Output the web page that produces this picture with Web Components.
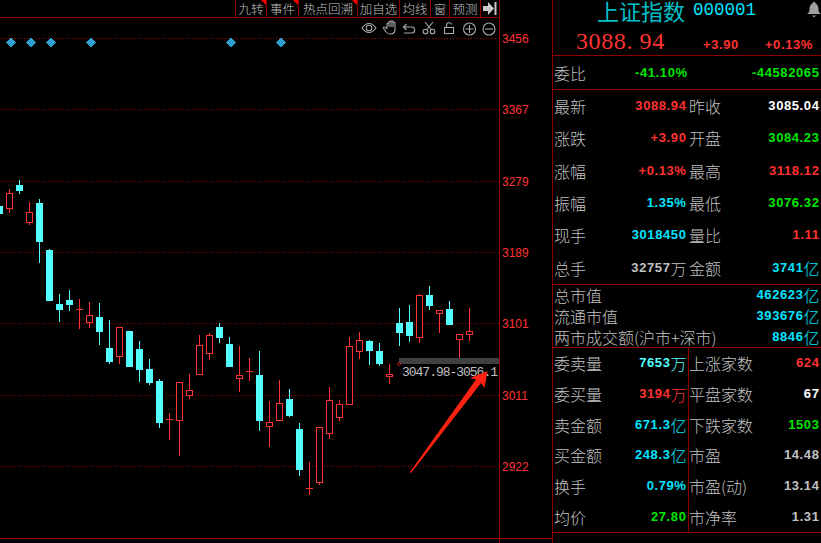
<!DOCTYPE html>
<html lang="zh">
<head>
<meta charset="utf-8">
<title>上证指数</title>
<style>
  html, body { margin: 0; height: 100%; background: #000; overflow: hidden; }
  body { font-family: "Noto Sans CJK SC", sans-serif; }
</style>
</head>
<body>
<stock-terminal>
  <chart-pane slot="chart">
    <tool-tab w="31" flag>九转</tool-tab>
    <tool-tab w="32" flag>事件</tool-tab>
    <tool-tab w="59" flag>热点回溯</tool-tab>
    <tool-tab w="42">加自选</tool-tab>
    <tool-tab w="31">均线</tool-tab>
    <tool-tab w="19">窗</tool-tab>
    <tool-tab w="31">预测</tool-tab>
  </chart-pane>
  <quote-panel slot="quote">
    <quote-block slot="main" rows="6" h="194" cols="2">
      <quote-cell label="最新" value="3088.94" tone="red"></quote-cell>
      <quote-cell label="昨收" value="3085.04" tone="white"></quote-cell>
      <quote-cell label="涨跌" value="+3.90" tone="red"></quote-cell>
      <quote-cell label="开盘" value="3084.23" tone="green"></quote-cell>
      <quote-cell label="涨幅" value="+0.13%" tone="red"></quote-cell>
      <quote-cell label="最高" value="3118.12" tone="red"></quote-cell>
      <quote-cell label="振幅" value="1.35%" tone="cyan"></quote-cell>
      <quote-cell label="最低" value="3076.32" tone="green"></quote-cell>
      <quote-cell label="现手" value="3018450" tone="cyan"></quote-cell>
      <quote-cell label="量比" value="1.11" tone="red"></quote-cell>
      <quote-cell label="总手" value="32757" unit="万" tone="grey"></quote-cell>
      <quote-cell label="金额" value="3741" unit="亿" tone="cyan"></quote-cell>
    </quote-block>
    <quote-block slot="main" rows="3" h="62" cols="1">
      <quote-cell label="总市值" value="462623" unit="亿" tone="cyan"></quote-cell>
      <quote-cell label="流通市值" value="393676" unit="亿" tone="cyan"></quote-cell>
      <quote-cell label="两市成交额(沪市+深市)" value="8846" unit="亿" tone="cyan"></quote-cell>
    </quote-block>
    <quote-block slot="main" rows="6" h="184" cols="2" divided>
      <quote-cell label="委卖量" value="7653" unit="万" tone="aqua"></quote-cell>
      <quote-cell label="上涨家数" value="624" tone="red"></quote-cell>
      <quote-cell label="委买量" value="3194" unit="万" tone="red"></quote-cell>
      <quote-cell label="平盘家数" value="67" tone="white"></quote-cell>
      <quote-cell label="卖金额" value="671.3" unit="亿" tone="cyan"></quote-cell>
      <quote-cell label="下跌家数" value="1503" tone="green"></quote-cell>
      <quote-cell label="买金额" value="248.3" unit="亿" tone="cyan"></quote-cell>
      <quote-cell label="市盈" value="14.48" tone="grey"></quote-cell>
      <quote-cell label="换手" value="0.79%" tone="cyan"></quote-cell>
      <quote-cell label="市盈(动)" value="13.14" tone="grey"></quote-cell>
      <quote-cell label="均价" value="27.80" tone="green"></quote-cell>
      <quote-cell label="市净率" value="1.31" tone="grey"></quote-cell>
    </quote-block>
  </quote-panel>
</stock-terminal>

<script>
const LINE = "#8c0000";
const RED = "#ff3232";
const AQUA = "#54ffff";

class StockTerminal extends HTMLElement {
  constructor() {
    super();
    this.attachShadow({ mode: "open" }).innerHTML = `
      <style>
        :host { display: grid; grid-template-columns: 552px 269px; width: 821px; height: 543px; background: #000; overflow: hidden; }
      </style>
      <slot name="chart"></slot>
      <slot name="quote"></slot>
    `;
  }
}

class ToolTab extends HTMLElement {
  constructor() {
    super();
    this.attachShadow({ mode: "open" }).innerHTML = `
      <style>
        :host { display: block; position: relative; box-sizing: border-box; height: 17px; border-left: 1px solid ${LINE};
          color: #c0c0c0; font: 300 12.5px/17px "Noto Sans CJK SC", sans-serif; text-align: center; white-space: nowrap; }
        :host([flag])::after { content: ""; position: absolute; top: 0; right: 0; border-top: 5px solid #f00; border-left: 5px solid transparent; }
      </style>
      <slot></slot>
    `;
  }
  connectedCallback() {
    this.style.width = this.getAttribute("w") + "px";
  }
}

// x of wick = 9 + 10 * i. [type, body top, body bottom, high, low]
const CANDLES = [
  ["c",206,214,206,214],
  ["r",193,209,189,213],["c",185,191,180,194],["r",212,223,202,225],["c",203,242,199,263],
  ["c",250,301,249,301],["c",304,310,294,322],["c",300,305,290,311],["d",309,309,299,329],
  ["r",315,323,302,328],["c",317,332,303,345],["c",348,362,320,364],["r",327,357,327,364],
  ["c",331,367,331,367],["c",349,370,341,382],["c",369,383,359,385],["c",381,423,379,428],
  ["d",419,419,413,440],["r",382,421,382,456],["r",390,396,374,399],["r",345,375,335,375],
  ["r",335,354,333,360],["c",327,338,323,343],["c",344,367,337,367],["r",375,379,346,392],
  ["d",371,371,358,381],["c",375,421,351,431],["r",422,427,401,447],["r",403,421,380,421],
  ["c",399,416,389,417],["c",429,470,423,476],["d",488,488,462,495],["r",427,483,427,485],
  ["r",400,434,387,439],["r",404,418,400,421],["r",346,405,337,405],["r",340,352,332,359],
  ["c",341,351,340,365],["c",351,364,343,366],["r",374,377,364,384],["c",323,333,308,346],
  ["c",322,336,305,342],["r",295,338,294,343],["c",295,306,286,310],["r",310,314,310,333],
  ["c",309,325,301,325],["r",334,340,334,358],["r",331,335,308,341],
];
const LEVELS = [[3456,38],[3367,109],[3279,181],[3189,252],[3101,323],[3011,395],[2922,466]];
const MARKS = [10,30,50,90,230,280];

function candleSvg([type, top, bottom, high, low], i) {
  const x = 10 * i - 1;
  const color = type === "c" ? AQUA : RED;
  let out = `<rect x="${x}" y="${high}" width="1" height="${low - high}" fill="${color}"/>`;
  if (type === "c") out += `<rect x="${x - 3}" y="${top}" width="7" height="${bottom - top}" fill="${color}"/>`;
  if (type === "r") out += `<rect x="${x - 2.5}" y="${top + 0.5}" width="6" height="${bottom - top - 1}" fill="#000" stroke="${color}"/>`;
  if (type === "d") out += `<rect x="${x - 3}" y="${top}" width="7" height="1" fill="${color}"/>`;
  return out;
}

class ChartPane extends HTMLElement {
  constructor() {
    super();
    const grid = LEVELS.map(([, y]) => `<line x1="0" x2="499" y1="${y + 0.5}" y2="${y + 0.5}" stroke="#a00000" stroke-dasharray="1 2"/>`).join("");
    const labels = LEVELS.map(([p, y]) => `<text x="502" y="${y + 4.5}">${p}</text>`).join("");
    const marks = MARKS.map(x => `<path d="M${x + 0.5} 37.5l5 5-5 5-5-5z" fill="#2f9fd0"/>`).join("");
    this.attachShadow({ mode: "open" }).innerHTML = `
      <style>
        :host { display: flex; flex-direction: column; position: relative; height: 543px; }
        .bar { display: flex; justify-content: flex-end; width: 500px; box-sizing: border-box; height: 18px; border-bottom: 1px solid ${LINE}; border-right: 1px solid ${LINE}; }
        .end { display: flex; align-items: center; justify-content: center; width: 19px; border-left: 1px solid ${LINE}; box-sizing: border-box; }
        .plot { display: block; flex: 1; }
        .axis text { font: 12px "Liberation Sans", sans-serif; fill: #ff3232; }
        .range { font: 13px "Liberation Mono", monospace; fill: #c0c0c0; }
        .icons { position: absolute; left: 359px; top: 19px; }
      </style>
      <div class="bar">
        <slot></slot>
        <div class="end">
          <svg width="14" height="13" viewBox="0 0 14 13"><path d="M0 4h5V0l6 6.500-6 6.500V9H0z" fill="#c8c8c8"/><rect x="11.500" y="0" width="2" height="13" fill="#c8c8c8"/></svg>
        </div>
      </div>
      <svg class="plot" width="552" height="525" viewBox="0 18 552 525" shape-rendering="crispEdges">
        ${grid}
        ${marks}
        ${CANDLES.map((c, i) => candleSvg(c, i)).join("")}
        <rect x="499" y="18" width="1" height="525" fill="${LINE}"/>
        <rect x="0" y="538" width="552" height="1" fill="${LINE}"/>
        <g class="axis" shape-rendering="auto">${labels}</g>
        <rect x="399" y="358" width="100" height="6" fill="#404040"/>
        <circle cx="399" cy="364" r="1.500" fill="#000" stroke="#a02020" shape-rendering="auto"/>
        <text class="range" x="402" y="375.500" shape-rendering="auto" textLength="96">3047.98-3056.1</text>
        <polygon points="410,472 476,379.500 470,378 487.500,371 484.500,388 481,383 411,473" fill="#ff2212" shape-rendering="auto"/>
      </svg>
      <svg class="icons" width="140" height="18" viewBox="0 0 140 18" fill="none" stroke="#a8a8a8" stroke-width="1.100">
        <path d="M3 9c2.500-3.500 5-4.500 7-4.500s4.500 1 7 4.500c-2.500 3.500-5 4.500-7 4.500S5.500 12.500 3 9z"/><circle cx="10" cy="9" r="2.800"/>
        <path transform="translate(2 1) scale(1 .88)" d="M26 10V4.500c0-1.400 2-1.400 2 0V8m0-.5V2.500c0-1.400 2-1.400 2 0V8m0-.5V2c0-1.400 2-1.400 2 0v6m0-.5V3.500c0-1.400 2-1.400 2 0V11c0 3-2 5-5 5-2 0-3-.7-4-2.500l-2.500-4c-.7-1.300 1-2.200 2-1l1.500 1.800"/>
        <path d="M47.500 5l-3 3 3 3M44.500 8H53c3.500 0 3.500 6 0 6h-8"/>
        <circle cx="66.500" cy="12.500" r="2.300"/><circle cx="73.500" cy="12.500" r="2.300"/><path d="M67.800 10.500L74 3M72.200 10.500L66 3"/>
        <rect x="85.500" y="8.500" width="9" height="6"/><path d="M87.500 8.500V6c0-3 5-3 5-.5"/>
        <circle cx="110.500" cy="10" r="6"/><path d="M106.500 10h8M110.500 6v8"/>
        <circle cx="130" cy="10" r="6"/><path d="M126 10h8"/>
      </svg>
    `;
  }
}

class QuotePanel extends HTMLElement {
  constructor() {
    super();
    this.attachShadow({ mode: "open" }).innerHTML = `
      <style>
        :host { display: block; box-sizing: border-box; width: 269px; height: 543px; border-left: 1px solid ${LINE}; background: #000; overflow: hidden; }
        .title { position: relative; display: flex; align-items: flex-start; gap: 8px; height: 24px; padding-left: 44px; }
        .title b { font: 400 22px/21px "Noto Sans CJK SC", sans-serif; color: #00c0cc; }
        .title span { font: 17.500px/21px "Liberation Mono", monospace; color: #00e5ff; }
        .bell { position: absolute; right: 0; top: 2px; }
        .price { display: flex; align-items: baseline; height: 32px; padding: 4px 0 0 23px; box-sizing: border-box; border-bottom: 1px solid ${LINE};
          color: #ff3232; font: 700 13px/27px "Liberation Sans", sans-serif; letter-spacing: .6px; }
        .price i { font: 24px/27px "Liberation Serif", serif; letter-spacing: .6px; width: 127px; white-space: pre; }
        .price span + span { margin-left: 26px; }
        .ratio { display: flex; align-items: center; height: 34px; box-sizing: border-box; padding: 0 1.500px 0 1px; border-bottom: 1px solid ${LINE}; }
        .ratio label { color: #c0c0c0; font: 300 16px "Noto Sans CJK SC", sans-serif; width: 81px; }
        .ratio span { color: #00e600; font: 700 13px "Liberation Sans", sans-serif; letter-spacing: .6px; }
        .ratio span:last-child { margin-left: auto; }
      </style>
      <div class="title">
        <b>上证指数</b><span>000001</span>
        <svg class="bell" width="14" height="16" viewBox="0 0 14 16"><path d="M7 0c1 0 1.500.6 1.500 1.500C11 2.300 11.500 5 11.500 8c0 1.500 1 3 2.500 4H0c1.500-1 2.500-2.500 2.500-4 0-3 .5-5.700 3-6.500C5.500.6 6 0 7 0z" fill="#a0a0a0"/><path d="M5 13.500h4L7 15.500z" fill="#a0a0a0"/></svg>
      </div>
      <div class="price"><i>3088. 94</i><span>+3.90</span><span>+0.13%</span></div>
      <div class="ratio"><label>委比</label><span>-41.10%</span><span>-44582065</span></div>
      <slot name="main"></slot>
    `;
  }
}

class QuoteBlock extends HTMLElement {
  constructor() {
    super();
    this.attachShadow({ mode: "open" }).innerHTML = `
      <style>
        :host { display: grid; box-sizing: content-box; border-bottom: 1px solid ${LINE}; position: relative; }
        :host([divided])::after { content: ""; position: absolute; top: 0; bottom: 0; left: 135px; width: 1px; background: ${LINE}; }
      </style>
      <slot></slot>
    `;
  }
  connectedCallback() {
    const cols = this.getAttribute("cols") === "2" ? "135px 133px" : "268px";
    this.style.gridTemplateColumns = cols;
    this.style.gridTemplateRows = `repeat(${this.getAttribute("rows")}, 1fr)`;
    this.style.height = this.getAttribute("h") + "px";
  }
}

const cellTemplate = document.createElement("template");
cellTemplate.innerHTML = `
  <style>
    :host { display: flex; align-items: center; justify-content: space-between; padding: 0 1.5px 0 1px; white-space: nowrap; min-width: 0; }
    label { color: #c0c0c0; font: 300 16px/20px "Noto Sans CJK SC", sans-serif; }
    .value { display: flex; align-items: center; font: 700 13px/20px "Liberation Sans", sans-serif; letter-spacing: .6px; }
    .value u { text-decoration: none; font: 300 16px/20px "Noto Sans CJK SC", sans-serif; letter-spacing: 0; }
    :host([tone="red"]) .value { color: #ff3232; }
    :host([tone="green"]) .value { color: #00e600; }
    :host([tone="cyan"]) .value { color: #00e5ff; }
    :host([tone="aqua"]) .value { color: #54ffff; }
    :host([tone="white"]) .value { color: #fff; }
    :host([tone="grey"]) .value { color: #c0c0c0; }
  </style>
  <label></label>
  <span class="value"><span class="num"></span><u></u></span>
`;

class QuoteCell extends HTMLElement {
  constructor() {
    super();
    this.attachShadow({ mode: "open" }).appendChild(cellTemplate.content.cloneNode(true));
  }
  connectedCallback() {
    this.shadowRoot.querySelector("label").textContent = this.getAttribute("label");
    this.shadowRoot.querySelector(".num").textContent = this.getAttribute("value");
    this.shadowRoot.querySelector("u").textContent = this.getAttribute("unit") || "";
  }
}

window.customElements.define("stock-terminal", StockTerminal);
window.customElements.define("tool-tab", ToolTab);
window.customElements.define("chart-pane", ChartPane);
window.customElements.define("quote-panel", QuotePanel);
window.customElements.define("quote-block", QuoteBlock);
window.customElements.define("quote-cell", QuoteCell);
</script>
</body>
</html>
